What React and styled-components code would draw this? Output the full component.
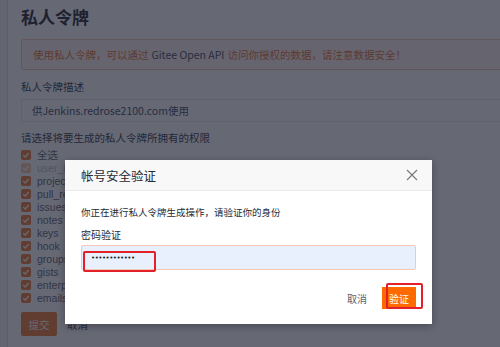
import React from 'react'
import styled, { createGlobalStyle } from 'styled-components'

const GlobalStyle = createGlobalStyle`
  html, body {
    margin: 0;
    padding: 0;
    background: #ffffff;
  }
  * { box-sizing: border-box; }
`

const FONT = `'Noto Sans CJK SC', 'Noto Sans', 'Liberation Sans', sans-serif`

const scopes = [
    { name: '全选' },
    { name: 'user_info', disabled: true },
    { name: 'projects' },
    { name: 'pull_requests' },
    { name: 'issues' },
    { name: 'notes' },
    { name: 'keys' },
    { name: 'hook' },
    { name: 'groups' },
    { name: 'gists' },
    { name: 'enterprises' },
    { name: 'emails' },
]

const Check = () => (
    <svg width='8' height='8' viewBox='0 0 8 8'>
        <path d='M1.2 4.1 L3.2 6 L6.8 2' fill='none' stroke='#fff' strokeWidth='1.3' />
    </svg>
)

const App = () => {
    return (
        <Screen>
            <GlobalStyle />
            <Page>
                <SideStrip />
                <Main>
                    <Title>私人令牌</Title>
                    <Notice>
                        使用私人令牌，可以通过 <b>Gitee Open API</b> 访问你授权的数据，请注意数据安全！
                    </Notice>
                    <FieldLabel>私人令牌描述</FieldLabel>
                    <TextField>供Jenkins.redrose2100.com使用</TextField>
                    <FieldLabel $top='9px'>请选择将要生成的私人令牌所拥有的权限</FieldLabel>
                    <ScopeList>
                        {scopes.map((s) => (
                            <ScopeRow key={s.name} $disabled={s.disabled}>
                                <Box $disabled={s.disabled}>
                                    <Check />
                                </Box>
                                <span>{s.name}</span>
                            </ScopeRow>
                        ))}
                    </ScopeList>
                    <Actions>
                        <SubmitButton>提交</SubmitButton>
                        <span>取消</span>
                    </Actions>
                </Main>
            </Page>
            <Overlay />
            <Dialog>
                <DialogHeader>
                    帐号安全验证
                    <svg width='12' height='12' viewBox='0 0 12 12'>
                        <path d='M1 1 L11 11 M11 1 L1 11' stroke='#777' strokeWidth='1.1' />
                    </svg>
                </DialogHeader>
                <DialogBody>
                    <Hint>你正在进行私人令牌生成操作，请验证你的身份</Hint>
                    <DialogLabel>密码验证</DialogLabel>
                    <PasswordField>
                        <Dots>••••••••••••</Dots>
                        <Marker $left='1px' $top='5px' $w='73px' $h='21px' />
                    </PasswordField>
                    <DialogFooter>
                        <CancelLink>取消</CancelLink>
                        <VerifyWrap>
                            <VerifyButton>验证</VerifyButton>
                            <Marker $left='4px' $top='-4px' $w='37px' $h='26px' />
                        </VerifyWrap>
                    </DialogFooter>
                </DialogBody>
            </Dialog>
        </Screen>
    )
}

export default App

const Screen = styled.div`
    position: relative;
    width: 500px;
    height: 347px;
    overflow: hidden;
    font-family: ${FONT};
`

const Page = styled.div`
    display: flex;
    height: 100%;
    background: #ffffff;
`

const SideStrip = styled.div`
    width: 8px;
    flex-shrink: 0;
    background: #f4f5f7;
    border-right: 1px solid #dcdee3;
`

const Main = styled.div`
    flex: 1;
    padding: 5px 0 0 13px;
    display: flex;
    flex-direction: column;
    min-width: 0;
`

const Title = styled.h1`
    margin: 0;
    font-size: 17px;
    line-height: 24px;
    font-weight: 700;
    color: #1f2329;
`

const Notice = styled.div`
    margin-top: 10px;
    width: 520px;
    height: 31px;
    padding-left: 11px;
    display: flex;
    align-items: center;
    white-space: nowrap;
    font-size: 10.5px;
    color: #e5722f;
    background: #fff3eb;
    border: 1px solid #f3c4a6;
    border-radius: 3px;

    b {
        font-weight: 400;
        color: #40485b;
        margin: 0 3px;
    }
`

const FieldLabel = styled.div`
    margin-top: ${(p) => p.$top || '10px'};
    font-size: 10.5px;
    line-height: 14px;
    color: #303643;
`

const TextField = styled.div`
    margin-top: 5px;
    width: 520px;
    height: 23px;
    padding-left: 10px;
    display: flex;
    align-items: center;
    font-size: 10.5px;
    color: #40485b;
    border: 1px solid #e3e5ea;
    border-radius: 2px;
`

const ScopeList = styled.div`
    margin-top: 3px;
    display: flex;
    flex-direction: column;
`

const ScopeRow = styled.div`
    height: 13px;
    line-height: 12px;
    display: flex;
    align-items: center;
    gap: 6px;
    font-family: 'Liberation Sans', 'Noto Sans CJK SC', sans-serif;
    font-size: 10.5px;
    color: ${(p) => (p.$disabled ? '#b8bcc6' : '#5b6270')};
`

const Box = styled.span`
    width: 10px;
    height: 10px;
    border-radius: 2px;
    display: flex;
    align-items: center;
    justify-content: center;
    background: ${(p) => (p.$disabled ? '#f6c7a6' : '#f0782d')};
`

const Actions = styled.div`
    margin-top: 8px;
    display: flex;
    align-items: center;
    gap: 10px;
    font-size: 10.5px;
    line-height: 13px;
    color: #40485b;
`

const SubmitButton = styled.div`
    width: 36px;
    height: 24px;
    display: flex;
    align-items: center;
    justify-content: center;
    background: #f0782d;
    color: #ffffff;
    border-radius: 2px;
`

const Overlay = styled.div`
    position: absolute;
    inset: 0;
    background: rgba(30, 33, 50, 0.68);
`

const Dialog = styled.div`
    position: absolute;
    left: 65px;
    top: 160px;
    width: 367px;
    height: 164px;
    background: #ffffff;
    box-shadow: 0 2px 8px rgba(0, 0, 0, 0.3);
`

const DialogHeader = styled.div`
    height: 31px;
    padding: 0 14px 0 16px;
    display: flex;
    align-items: center;
    justify-content: space-between;
    background: #f8f8f9;
    border-bottom: 1px solid #e9eaec;
    font-size: 12.5px;
    color: #262b33;
`

const DialogBody = styled.div`
    padding: 15px 16px 0 16px;
`

const Hint = styled.div`
    font-size: 9.5px;
    line-height: 13px;
    color: #262b33;
`

const DialogLabel = styled.div`
    margin-top: 9px;
    font-size: 10px;
    line-height: 13px;
    color: #262b33;
`

const PasswordField = styled.div`
    position: relative;
    margin-top: 4px;
    height: 25px;
    padding-left: 9px;
    display: flex;
    align-items: center;
    background: #e8f0fe;
    border: 1px solid #f3c9b6;
    border-radius: 2px;
`

const Dots = styled.span`
    font-family: 'DejaVu Sans', sans-serif;
    font-size: 7px;
    line-height: 10px;
    letter-spacing: -0.5px;
    color: #222;
`

const Marker = styled.div`
    position: absolute;
    left: ${(p) => p.$left};
    top: ${(p) => p.$top};
    width: ${(p) => p.$w};
    height: ${(p) => p.$h};
    border: 2px solid #e3202a;
    border-radius: 2px;
`

const DialogFooter = styled.div`
    margin-top: 17px;
    display: flex;
    justify-content: flex-end;
    align-items: center;
    gap: 15px;
`

const CancelLink = styled.span`
    font-size: 10px;
    color: #5b6270;
`

const VerifyWrap = styled.div`
    position: relative;
`

const VerifyButton = styled.div`
    width: 34px;
    height: 22px;
    display: flex;
    align-items: center;
    justify-content: center;
    background: #ff6a00;
    color: #ffffff;
    font-size: 10px;
`
